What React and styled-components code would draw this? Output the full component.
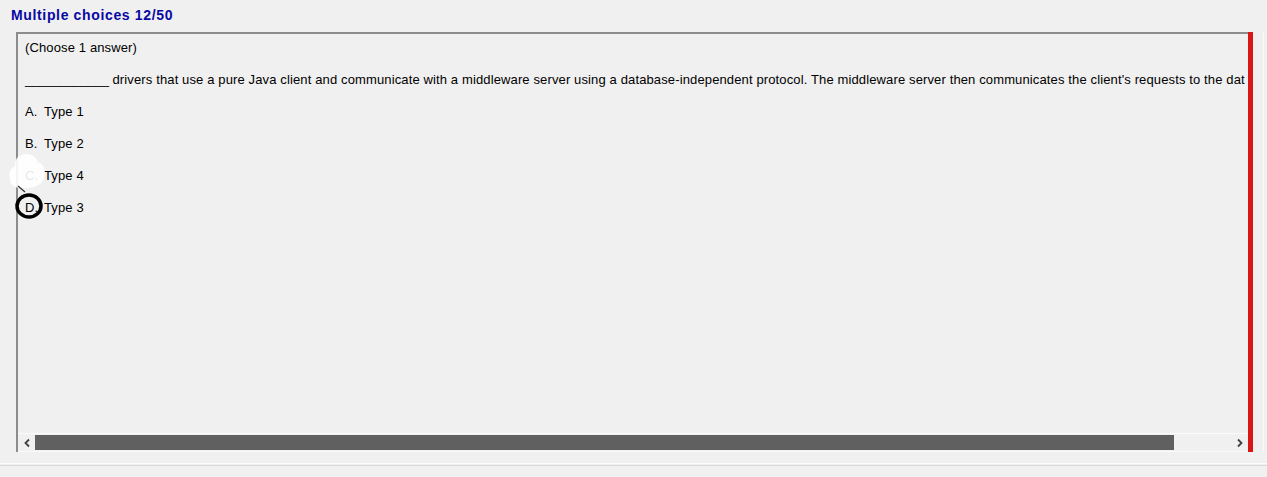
import React from "react";
import styled, { createGlobalStyle } from "styled-components";

const Global = createGlobalStyle`
  html, body { margin: 0; padding: 0; background: #f0f0f0; }
  body { font-family: "Liberation Sans", Arial, sans-serif; }
`;

const Page = styled.div`
  position: relative;
  width: 1267px;
  height: 477px;
  overflow: hidden;
  background: #f0f0f0;
  display: flex;
  flex-direction: column;
`;

const Title = styled.div`
  margin: 7px 0 0 11px;
  height: 16px;
  line-height: 16px;
  font-size: 14px;
  font-weight: bold;
  letter-spacing: 0.65px;
  color: #0808a4;
  white-space: nowrap;
`;

const Row = styled.div`
  display: flex;
  margin: 9px 0 0 16px;
  height: 420px;
`;

const Panel = styled.div`
  width: 1230px;
  height: 418px;
  border-top: 2px solid #8c8c8c;
  border-left: 2px solid #8c8c8c;
  display: flex;
  flex-direction: column;
`;

const Content = styled.div`
  flex: 1;
  overflow: hidden;
  padding: 6px 0 0 7px;
  display: flex;
  flex-direction: column;
  gap: 17px;
`;

const Line = styled.div`
  font-size: 13px;
  line-height: 15px;
  letter-spacing: 0.13px;
  color: #000;
  white-space: nowrap;
`;

const Blank = styled.span`
  letter-spacing: -0.25px;
`;

const Letter = styled.span`
  display: inline-block;
  width: 19px;
`;

const Scrollbar = styled.div`
  height: 17px;
  display: flex;
  align-items: stretch;
  background: #f0f0f0;
  border-top: 1px solid #fbfbfb;
  border-bottom: 1px solid #fbfbfb;
`;

const ArrowBtn = styled.div`
  width: 17px;
  display: flex;
  align-items: center;
  justify-content: center;
  flex-shrink: 0;
`;

const Track = styled.div`
  flex: 1;
  display: flex;
  align-items: center;
`;

const Thumb = styled.div`
  height: 15px;
  background: #606060;
`;

const RedBar = styled.div`
  width: 5px;
  height: 420px;
  background: #d91616;
`;

const Edge = styled.div`
  width: 1px;
  height: 420px;
  margin-left: 10px;
  background: #fafafa;
`;

const Footer = styled.div`
  margin-top: 11px;
  border-top: 1px solid #fcfcfc;
  border-bottom: 1px solid #d8d8d8;
  height: 1px;
`;

const Overlay = styled.svg`
  position: absolute;
  left: 0;
  top: 0;
  pointer-events: none;
`;

const Chevron = ({ dir }) => (
  <svg width="8" height="10" viewBox="0 0 8 10">
    <path
      d={dir === "left" ? "M6 1.5 L2.5 5 L6 8.5" : "M2 1.5 L5.5 5 L2 8.5"}
      fill="none"
      stroke="#404040"
      strokeWidth="1.8"
    />
  </svg>
);

const options = [
  ["A.", "Type 1"],
  ["B.", "Type 2"],
  ["C.", "Type 4"],
  ["D.", "Type 3"],
];

export default function App() {
  return (
    <Page>
      <Global />
      <Title>Multiple choices 12/50</Title>
      <Row>
        <Panel>
          <Content>
            <Line>(Choose 1 answer)</Line>
            <Line>
              <Blank>____________</Blank> drivers that use a pure Java client and communicate with a middleware server using a database-independent protocol. The middleware server then communicates the client's requests to the dat
            </Line>
            {options.map(([l, t]) => (
              <Line key={l}>
                <Letter>{l}</Letter>
                {t}
              </Line>
            ))}
          </Content>
          <Scrollbar>
            <ArrowBtn>
              <Chevron dir="left" />
            </ArrowBtn>
            <Track>
              <Thumb style={{ width: "1139px" }} />
            </Track>
            <ArrowBtn>
              <Chevron dir="right" />
            </ArrowBtn>
          </Scrollbar>
        </Panel>
        <RedBar />
        <Edge />
      </Row>
      <Footer />
      <Overlay width="1267" height="477" viewBox="0 0 1267 477">
        <path
          d="M22 155 C30 152 36 157 38 162 C44 164 46 171 44 178 C42 186 32 188 24 188 C16 189 9 185 10 178 C8 172 11 168 15 166 C15 160 17 156 22 155 Z"
          fill="#ffffff"
          fillOpacity="0.9"
        />
        <line x1="18" y1="186" x2="25" y2="192" stroke="#303030" strokeWidth="1.2" />
        <ellipse cx="29" cy="206" rx="12" ry="11" fill="none" stroke="#000" strokeWidth="3.5" />
      </Overlay>
    </Page>
  );
}
